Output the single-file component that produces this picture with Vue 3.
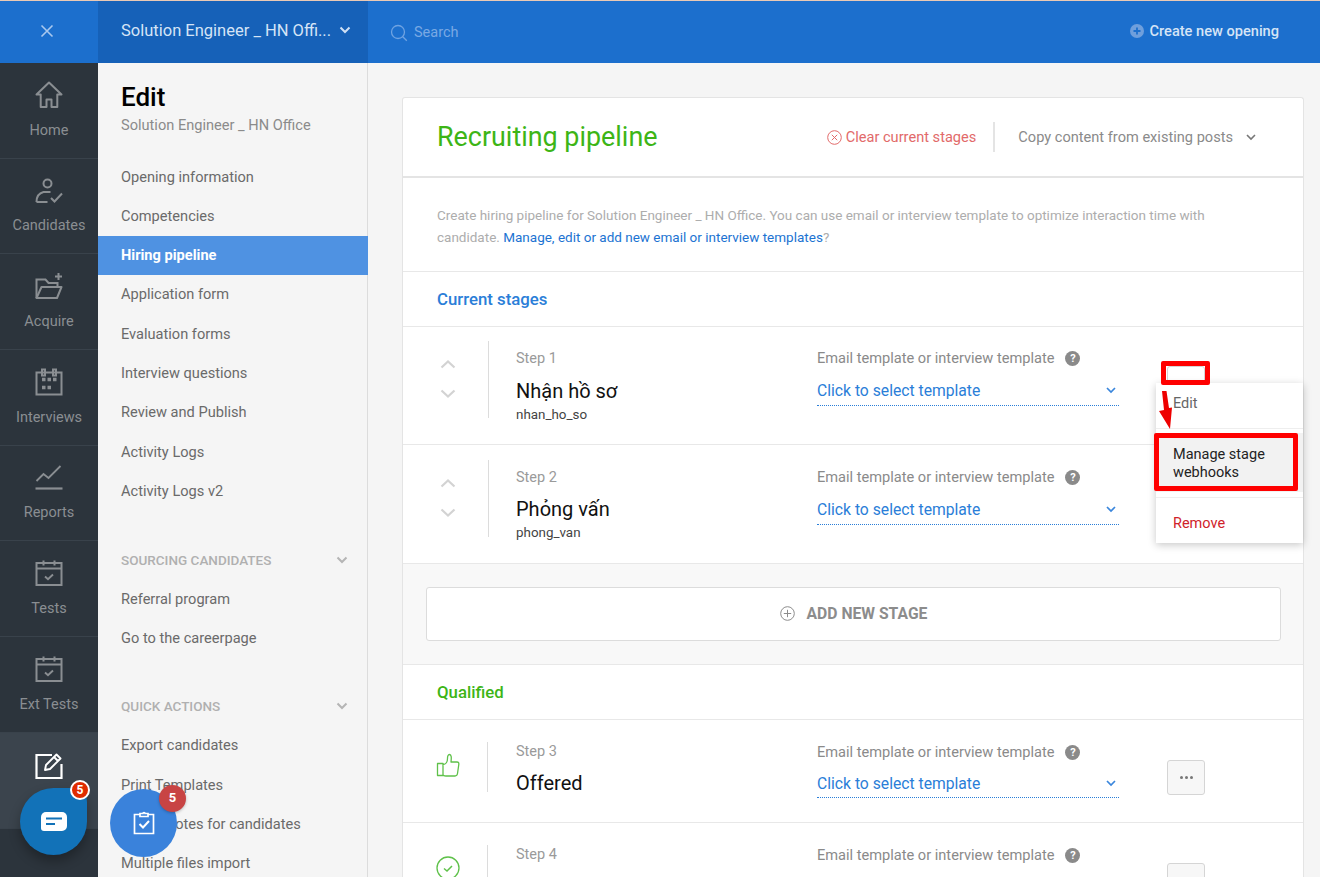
<script setup>
const rail = [
  { label: 'Home', icon: 'home' },
  { label: 'Candidates', icon: 'cand' },
  { label: 'Acquire', icon: 'folder' },
  { label: 'Interviews', icon: 'cal' },
  { label: 'Reports', icon: 'chart' },
  { label: 'Tests', icon: 'test' },
  { label: 'Ext Tests', icon: 'test' },
  { label: '', icon: 'edit', active: true },
]
const mainLinks = ['Opening information', 'Competencies', 'Hiring pipeline', 'Application form', 'Evaluation forms', 'Interview questions', 'Review and Publish', 'Activity Logs', 'Activity Logs v2']
const sourcing = ['Referral program', 'Go to the careerpage']
const quick = ['Export candidates', 'Print Templates', 'Create notes for candidates', 'Multiple files import']
const current = [
  { step: 'Step 1', name: 'Nhận hồ sơ', code: 'nhan_ho_so', cls: 'h118' },
  { step: 'Step 2', name: 'Phỏng vấn', code: 'phong_van', cls: 'h119' },
]
</script>

<template>
  <div class="app">
    <aside class="rail">
      <div class="close-cell">
        <svg width="14" height="14" viewBox="0 0 14 14"><path d="M1.5 1.5l11 11M12.5 1.5l-11 11" stroke="#a9c8ee" stroke-width="1.6" fill="none"/></svg>
      </div>
      <div v-for="item in rail" :key="item.icon + item.label" class="rail-item" :class="{ active: item.active }">
        <svg class="rail-icon" viewBox="0 0 28 28" width="28" height="28" fill="none" stroke="currentColor" stroke-width="2">
          <path v-if="item.icon === 'home'" d="M14 1.500L1.500 13.500h4.200v12.500h5.800v-7.500h5v7.500h5.800V13.500h4.200z" stroke-linejoin="round"/>
          <g v-else-if="item.icon === 'cand'">
            <circle cx="12.500" cy="6.500" r="4"/>
            <path d="M1.500 25c0-6 3-9 7-10h7M1.500 25h11"/>
            <path d="M16 21l3.500 3.500L27 16.500"/>
          </g>
          <g v-else-if="item.icon === 'folder'">
            <path d="M1.500 26V7.500h9l3 3.500h9v4"/>
            <path d="M1.500 26l5-11h20l-4.500 11z" stroke-linejoin="round"/>
            <path d="M23.500 1v7M20 4.500h7" stroke-width="2"/>
          </g>
          <g v-else-if="item.icon === 'cal'">
            <rect x="1.500" y="4.500" width="25" height="22"/>
            <path d="M7 1.500h3v6H7zM18 1.500h3v6h-3z"/>
            <path d="M7 12h3.500M12.500 12h3.500M18 12h3.500M7 20h3.500M12.500 20h3.500" stroke-width="3.400" transform="translate(0 -.5)"/>
          </g>
          <g v-else-if="item.icon === 'chart'">
            <path d="M1.500 17l7-7 5 4 12-12" stroke-width="1.800"/>
            <path d="M0.500 24.500h27" stroke-width="2.200"/>
          </g>
          <g v-else-if="item.icon === 'test'">
            <rect x="1.500" y="4" width="25" height="22"/>
            <path d="M1.500 9.500h25M8.500 1.500v5M19.500 1.500v5"/>
            <path d="M10 17.500l3 2.800 5-4.800" stroke-width="1.900"/>
          </g>
          <g v-else>
            <path d="M17 4H1.500v23h25V13" stroke-width="2.200"/>
            <path d="M10 19l1-5L21.500 3.500l4 4L15 18zM19 6l4 4" stroke-linejoin="round" stroke-width="1.900"/>
          </g>
        </svg>
        <span v-if="item.label">{{ item.label }}</span>
      </div>
    </aside>

    <div class="right">
      <header class="topbar">
        <div class="opening">
          <span class="opening-name">Solution Engineer _ HN Offi...</span>
          <svg width="12" height="8" viewBox="0 0 12 8"><path d="M1.500 1.500L6 6l4.500-4.500" stroke="#cfe0f5" stroke-width="2" fill="none"/></svg>
        </div>
        <div class="search">
          <svg width="18" height="18" viewBox="0 0 18 18" fill="none" stroke="#6fa3e2" stroke-width="1.300"><circle cx="8" cy="8" r="6.500"/><path d="M12.800 12.800l4 4"/></svg>
          <span>Search</span>
        </div>
        <div class="create">
          <svg width="14" height="14" viewBox="0 0 14 14"><circle cx="7" cy="7" r="7" fill="#6f9fdc"/><path d="M7 3.500v7M3.500 7h7" stroke="#1c6fcd" stroke-width="1.800"/></svg>
          <span>Create new opening</span>
        </div>
      </header>

      <div class="body">
        <nav class="subnav">
          <h1>Edit</h1>
          <p class="sub-caption">Solution Engineer _ HN Office</p>
          <ul class="links first">
            <li v-for="l in mainLinks" :key="l" :class="{ current: l === 'Hiring pipeline' }">{{ l }}</li>
          </ul>
          <div class="group-title">
            <span>SOURCING CANDIDATES</span>
            <svg width="12" height="8" viewBox="0 0 12 8"><path d="M1.500 1.500L6 6l4.500-4.500" stroke="#b5b5b5" stroke-width="2" fill="none"/></svg>
          </div>
          <ul class="links">
            <li v-for="l in sourcing" :key="l">{{ l }}</li>
          </ul>
          <div class="group-title second">
            <span>QUICK ACTIONS</span>
            <svg width="12" height="8" viewBox="0 0 12 8"><path d="M1.500 1.500L6 6l4.500-4.500" stroke="#b5b5b5" stroke-width="2" fill="none"/></svg>
          </div>
          <ul class="links">
            <li v-for="l in quick" :key="l">{{ l }}</li>
          </ul>
        </nav>

        <main class="content">
          <section class="card">
            <div class="card-head">
              <h2>Recruiting pipeline</h2>
              <div class="clear">
                <svg width="15" height="15" viewBox="0 0 15 15" fill="none" stroke="#e26a6a" stroke-width="1"><circle cx="7.500" cy="7.500" r="6.800"/><path d="M4.800 4.800l5.400 5.400M10.200 4.800l-5.400 5.400"/></svg>
                <span>Clear current stages</span>
              </div>
              <div class="copy">
                <span>Copy content from existing posts</span>
                <svg width="10" height="7" viewBox="0 0 10 7"><path d="M1 1l4 4 4-4" stroke="#777" stroke-width="1.600" fill="none"/></svg>
              </div>
            </div>

            <p class="desc">Create hiring pipeline for Solution Engineer _ HN Office. You can use email or interview template to optimize interaction time with candidate. <a>Manage, edit or add new email or interview templates</a>?</p>

            <div class="section-title blue">Current stages</div>

            <div v-for="s in current" :key="s.step" class="stage tall" :class="s.cls">
              <div class="stage-lead">
                <svg width="16" height="40" viewBox="0 0 16 40" fill="none" stroke="#d3d3d3" stroke-width="2.200"><path d="M1.500 8.500L8 2.500l6.500 6M1.500 31.500L8 37.500l6.500-6"/></svg>
              </div>
              <div class="stage-info">
                <div class="step-label">{{ s.step }}</div>
                <div class="stage-name">{{ s.name }}</div>
                <div class="stage-code">{{ s.code }}</div>
              </div>
              <div class="template">
                <div class="tpl-label">
                  <span>Email template or interview template</span>
                  <span class="help">?</span>
                </div>
                <div class="tpl-select">
                  <span>Click to select template</span>
                  <svg width="10" height="7" viewBox="0 0 10 7"><path d="M1 1l4 4 4-4" stroke="#3a86dc" stroke-width="1.700" fill="none"/></svg>
                </div>
              </div>
            </div>

            <div class="add-area">
              <div class="add-btn">
                <svg width="15" height="15" viewBox="0 0 15 15" fill="none" stroke="#8c8c8c" stroke-width="1"><circle cx="7.500" cy="7.500" r="6.800"/><path d="M7.500 3.800v7.400M3.800 7.500h7.400"/></svg>
                <span>ADD NEW STAGE</span>
              </div>
            </div>

            <div class="section-title green">Qualified</div>

            <div class="stage short">
              <div class="stage-lead">
                <svg width="24" height="24" viewBox="0 0 24 24" fill="none" stroke="#5fc14a" stroke-width="1.300" stroke-linejoin="round"><path d="M7 10.500h-5.500v12H7zM7 11.500c3 0 4.500-3 4.500-6 0-2 .5-4 2-4 2 0 2 3 1.500 7.500h6c1.500 0 2 1 1.800 2.500l-1.300 9c-.2 1.500-1 2.500-2.500 2.500H10c-1.500 0-3-.5-3-1.500"/></svg>
              </div>
              <div class="stage-info">
                <div class="step-label">Step 3</div>
                <div class="stage-name">Offered</div>
              </div>
              <div class="template">
                <div class="tpl-label">
                  <span>Email template or interview template</span>
                  <span class="help">?</span>
                </div>
                <div class="tpl-select">
                  <span>Click to select template</span>
                  <svg width="10" height="7" viewBox="0 0 10 7"><path d="M1 1l4 4 4-4" stroke="#3a86dc" stroke-width="1.700" fill="none"/></svg>
                </div>
              </div>
              <div class="more"><i></i><i></i><i></i></div>
            </div>

            <div class="stage short last">
              <div class="stage-lead">
                <svg width="24" height="24" viewBox="0 0 24 24" fill="none" stroke="#5fc14a" stroke-width="1.300"><circle cx="12" cy="12" r="11"/><path d="M8 12.500l3 2.500 5-5" stroke-width="1.500"/></svg>
              </div>
              <div class="stage-info">
                <div class="step-label">Step 4</div>
              </div>
              <div class="template">
                <div class="tpl-label">
                  <span>Email template or interview template</span>
                  <span class="help">?</span>
                </div>
              </div>
              <div class="more"><i></i><i></i><i></i></div>
            </div>
          </section>
        </main>
      </div>
    </div>

    <div class="menu-trigger"></div>
    <div class="menu">
      <div class="menu-item edit">Edit</div>
      <div class="menu-item webhooks">Manage stage<br>webhooks</div>
      <div class="menu-item remove">Remove</div>
    </div>
    <div class="mark mark-btn"></div>
    <div class="mark mark-item"></div>
    <svg class="arrow" width="14" height="40" viewBox="0 0 14 40"><path d="M3 0h4.500L10 17l3-.5L11 38 0 20l5-1z" fill="#ee0000"/></svg>

    <div class="fab chat">
      <svg width="26" height="20" viewBox="0 0 26 20"><path d="M5 0h16a5 5 0 0 1 5 5v9a5 5 0 0 1-5 5H3a3 3 0 0 1-3-3V5a5 5 0 0 1 5-5z" fill="#fff"/><path d="M5 6.500h16M5 12h9" stroke="#1272b8" stroke-width="2"/></svg>
      <span class="chat-badge">5</span>
    </div>
    <div class="fab tasks">
      <svg width="22" height="24" viewBox="0 0 22 24" fill="none" stroke="#fff" stroke-width="1.700"><path d="M7 3.500H1.500v19h19v-19H15"/><path d="M7 5.500V2.500h3a1 1 0 0 1 2 0h3v3z"/><path d="M6.500 13l3.500 3.500 6-6.500" stroke-width="2"/></svg>
      <span class="tasks-badge">5</span>
    </div>
  </div>
</template>

<style>
html, body { margin: 0; height: 100%; overflow: hidden; background: #f5f5f5; }
</style>

<style scoped>
* { box-sizing: border-box; }
.app {
  position: relative;
  width: 1320px;
  height: 877px;
  overflow: hidden;
  display: flex;
  font-family: Roboto, "Noto Sans", sans-serif;
  font-size: 14px;
  color: #333;
  background: #f5f5f5;
}
.rail { width: 98px; flex: none; background: #2c343c; }
.close-cell {
  height: 63px;
  background: #1c6fcd;
  border-top: 1px solid #e9c9b5;
  padding: 0 4px 2px 0;
  display: flex;
  align-items: center;
  justify-content: center;
}
.rail-item {
  height: 95.700px;
  border-bottom: 1px solid #39424b;
  display: flex;
  flex-direction: column;
  align-items: center;
  padding-top: 18px;
  color: #8a8e92;
  font-size: 14.500px;
  gap: 12.500px;
}
.rail-item.active { background: #3b444d; color: #fff; }
.rail-icon { flex: none; }
.right { flex: 1; min-width: 0; display: flex; flex-direction: column; }
.topbar {
  height: 63px;
  flex: none;
  background: #1c6fcd;
  border-top: 1px solid #e9c9b5;
  display: flex;
  align-items: center;
}
.opening {
  width: 270px;
  height: 100%;
  background: #1661b8;
  padding: 0 17px 4px 23px;
  display: flex;
  align-items: center;
  justify-content: space-between;
  color: #d5e4f6;
  font-size: 16.500px;
}
.search {
  display: flex;
  align-items: center;
  gap: 6px;
  margin-left: 22px;
  color: #79a9e4;
  font-size: 14.500px;
  padding-top: 1px;
}
.create {
  margin-left: auto;
  margin-right: 41px;
  margin-bottom: 3px;
  display: flex;
  align-items: center;
  gap: 6px;
  color: #d5e4f6;
  font-weight: 500;
  font-size: 14.600px;
}
.body { flex: 1; min-height: 0; display: flex; }
.subnav {
  width: 270px;
  flex: none;
  background: #f5f5f5;
  border-right: 1px solid #dcdcdc;
  padding-top: 18px;
}
.subnav h1 {
  margin: 0;
  padding-left: 23px;
  font-size: 26px;
  line-height: 33px;
  font-weight: 500;
  color: #000;
}
.sub-caption {
  margin: 1px 0 0;
  padding-left: 23px;
  line-height: 20px;
  font-size: 14.600px;
  color: #8b8b8b;
}
.links { list-style: none; margin: 0; padding: 0; }
.links.first { margin-top: 22.500px; }
.links li {
  height: 39.300px;
  padding-left: 23px;
  line-height: 39.300px;
  font-size: 14.600px;
  color: #6a6a6a;
  white-space: nowrap;
}
.links li.current {
  margin-right: -1px;
  background: #4f92e2;
  color: #fff;
  font-weight: 700;
  font-size: 14.600px;
}
.group-title {
  display: flex;
  align-items: center;
  justify-content: space-between;
  margin-top: 29px;
  height: 40px;
  padding: 0 19px 1px 23px;
  font-size: 13.500px;
  font-weight: 500;
  color: #b0b0b0;
}
.group-title.second { margin-top: 27.500px; }
.content { flex: 1; min-width: 0; padding: 34px 16px 0 34px; overflow: hidden; }
.card {
  background: #fff;
  border: 1px solid #e4e4e4;
  border-radius: 3px;
  border-bottom: 0;
}
.card-head {
  height: 80px;
  border-bottom: 2px solid #e4e4e4;
  display: flex;
  align-items: center;
  padding: 0 47px 0 34px;
}
.card-head h2 {
  margin: 0 auto 0 0;
  font-size: 26.900px;
  font-weight: 400;
  color: #3db516;
}
.clear {
  display: flex;
  align-items: center;
  gap: 4px;
  color: #e26a6a;
  font-size: 14.600px;
  height: 30px;
  padding-right: 17px;
  border-right: 2px solid #e4e4e4;
}
.copy {
  display: flex;
  align-items: center;
  gap: 13px;
  margin-left: 23px;
  color: #8a8a8a;
  font-size: 14.600px;
}
.desc {
  margin: 0;
  height: 94px;
  padding: 26px 60px 0 34px;
  border-bottom: 1px solid #e8e8e8;
  font-size: 13.500px;
  line-height: 22px;
  color: #adadad;
}
.desc a { color: #1c73d2; }
.section-title {
  height: 55px;
  padding-left: 34px;
  line-height: 54px;
  border-bottom: 1px solid #e8e8e8;
  font-size: 16.800px;
  font-weight: 500;
}
.section-title.blue { color: #2a7ed8; }
.section-title.green { color: #3db516; border-top: 1px solid #e8e8e8; height: 56px; }
.stage {
  position: relative;
  display: flex;
  border-bottom: 1px solid #e8e8e8;
  padding-top: 14px;
}
.stage.h118 { height: 118px; }
.stage.h119 { height: 119px; padding-top: 15px; }
.stage.short { height: 103px; padding-top: 22px; }
.stage.last { height: 60px; }
.stage-lead {
  width: 86px;
  height: 77px;
  flex: none;
  border-right: 1px solid #dcdcdc;
  padding: 18px 0 0 37px;
}
.short .stage-lead { width: 85px; height: 50px; padding: 11px 0 0 33px; }
.stage-info { width: 328px; flex: none; padding-left: 27px; }
.short .stage-info { width: 329px; padding-left: 28px; }
.step-label { font-size: 14.500px; line-height: 20px; color: #9a9a9a; margin-top: 8px; }
.short .step-label { margin-top: 0; }
.stage-name {
  font-size: 20px;
  line-height: 26px;
  margin-top: 9px;
  color: #111;
}
.h119 .stage-name { margin-top: 8px; }
.short .stage-name { margin-top: 8px; }
.stage-code { font-size: 13.400px; line-height: 18px; margin-top: 2px; color: #444; }
.template { width: 302px; flex: none; }
.tall .template { padding-top: 7px; }
.tpl-label {
  display: flex;
  align-items: center;
  gap: 11px;
  font-size: 14.600px;
  line-height: 20px;
  color: #8a8a8a;
}
.help {
  width: 15px;
  height: 15px;
  border-radius: 50%;
  background: #8a8a8a;
  color: #fff;
  font-size: 11px;
  font-weight: 700;
  line-height: 15px;
  text-align: center;
}
.tpl-select {
  margin-top: 8px;
  height: 28px;
  display: flex;
  align-items: center;
  justify-content: space-between;
  padding-right: 3px;
  border-bottom: 1px dotted #2a7ed8;
  color: #2a7ed8;
  font-size: 15.700px;
}
.tall .tpl-select { margin-top: 8px; height: 30px; padding-bottom: 1px; }
.more {
  width: 38px;
  height: 35px;
  margin: 18px 0 0 48px;
  border: 1px solid #d5d5d5;
  border-radius: 3px;
  background: #f7f7f7;
  display: flex;
  align-items: center;
  justify-content: center;
  gap: 2px;
}
.more i { width: 3px; height: 3px; border-radius: 50%; background: #777; }
.add-area { height: 100px; background: #f8f8f8; padding: 23px 22px 0 23px; }
.add-btn {
  height: 54px;
  background: #fff;
  border: 1px solid #dcdcdc;
  border-radius: 3px;
  padding-bottom: 1px;
  display: flex;
  align-items: center;
  justify-content: center;
  gap: 12px;
  color: #8c8c8c;
  font-size: 15.700px;
  font-weight: 700;
}
.menu-trigger {
  position: absolute;
  left: 1167px;
  top: 366px;
  width: 38px;
  height: 20px;
  background: #fff;
  border: 1px solid #d5d5d5;
  border-radius: 3px;
}
.menu {
  position: absolute;
  left: 1156px;
  top: 383px;
  width: 147px;
  height: 160px;
  background: #fff;
  box-shadow: 0 2px 8px rgba(0, 0, 0, .22);
  font-size: 14.500px;
}
.menu-item { padding-left: 17px; }
.menu-item.edit { height: 46px; padding-top: 12px; color: #666; border-bottom: 1px solid #eee; }
.menu-item.webhooks {
  height: 59px;
  margin-top: 4px;
  padding-top: 13px;
  line-height: 18px;
  background: #f2f2f2;
  color: #222;
}
.menu-item.remove {
  height: 46px;
  margin-top: 5px;
  border-top: 1px solid #eee;
  padding-top: 17px;
  color: #d0222a;
}
.mark { position: absolute; border: 5px solid #f00; border-radius: 2px; }
.mark-btn { left: 1161px; top: 361px; width: 49px; height: 24px; }
.mark-item { left: 1154px; top: 433px; width: 144px; height: 58px; }
.arrow { position: absolute; left: 1159px; top: 391px; }
.fab { position: absolute; display: flex; align-items: center; justify-content: center; }
.chat {
  left: 20px;
  top: 788px;
  width: 67px;
  height: 67px;
  background: #1272b8;
  border-radius: 50% 50% 50% 50% / 50%;
  border-top-right-radius: 14px;
  box-shadow: 0 6px 12px rgba(0, 0, 0, .3);
}
.chat-badge {
  position: absolute;
  right: -3px;
  top: -8px;
  width: 20px;
  height: 20px;
  border-radius: 50%;
  background: #df2c00;
  border: 2px solid #fff;
  color: #fff;
  font-size: 12px;
  font-weight: 700;
  line-height: 16px;
  text-align: center;
}
.tasks {
  left: 110px;
  top: 789px;
  width: 67px;
  height: 68px;
  border-radius: 50%;
  background: #3a82db;
}
.tasks-badge {
  position: absolute;
  left: 49px;
  top: -4px;
  width: 27px;
  height: 27px;
  border-radius: 50%;
  background: #c84444;
  color: #fff;
  font-size: 13px;
  font-weight: 700;
  line-height: 26px;
  text-align: center;
  box-shadow: 0 1px 3px rgba(0, 0, 0, .25);
}
</style>
